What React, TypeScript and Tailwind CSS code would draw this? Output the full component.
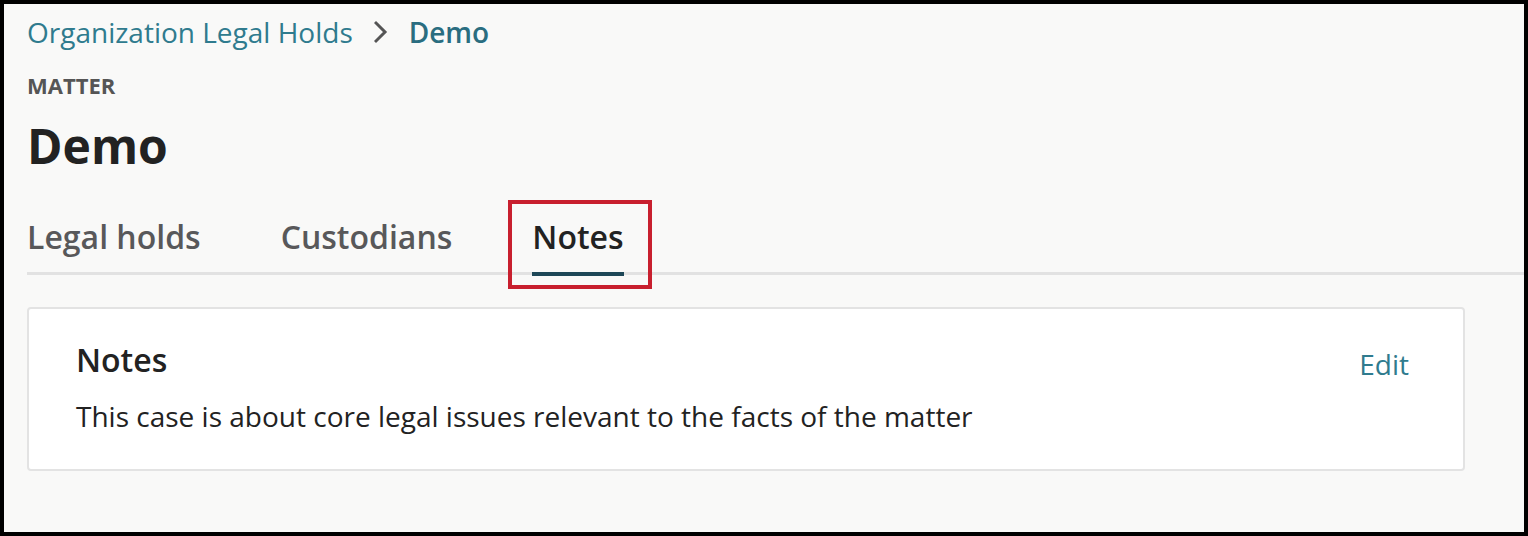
const font = { fontFamily: '"Open Sans", "Noto Sans", sans-serif' }

function Chevron() {
  return (
    <svg width="14" height="24" viewBox="0 0 14 24" className="mx-[21px]" aria-hidden>
      <polyline points="2,3 11,12 2,21" fill="none" stroke="#555555" strokeWidth="3" strokeLinecap="square" />
    </svg>
  )
}

const TABS = ["Legal holds", "Custodians", "Notes"]

export default function App() {
  const active = "Notes"
  return (
    <div style={font} className="h-[536px] w-full border-4 border-black bg-[#f9f9f8] box-border overflow-hidden">
      <div className="pl-[23px]">
        {/* breadcrumb */}
        <nav className="flex items-center pt-[8px] text-[28px] leading-[40px]">
          <a className="text-[#2f7b8e]">Organization Legal Holds</a>
          <Chevron />
          <span className="font-semibold text-[#2a6d80]">Demo</span>
        </nav>

        <p className="mt-[18px] text-[22px] leading-[30px] font-bold uppercase text-[#555555]">Matter</p>
        <h1 className="mt-[16px] text-[48px] leading-[60px] font-bold text-[#222222]">Demo</h1>

        {/* tabs */}
        <div className="mt-[39px] flex gap-[80px] border-b-[3px] border-[#e2e2e2]">
          {TABS.map((t) => (
            <div
              key={t}
              className={`relative pb-[13px] text-[32px] leading-[44px] font-semibold ${
                t === active ? "text-[#222222]" : "text-[#58585a]"
              }`}
            >
              {t}
              {t === active && (
                <>
                  <span className="absolute left-0 right-0 -bottom-[4px] h-1 bg-[#1d4757]" />
                  <span className="absolute -left-[24px] -top-[15px] -right-[28px] -bottom-[17px] border-4 border-[#c81f2e] z-10" />
                </>
              )}
            </div>
          ))}
        </div>

        {/* notes card */}
        <div className="mt-[32px] mr-[59px] rounded-[4px] border-2 border-[#e3e3e3] bg-white pl-[47px] pr-[54px] pt-[29px] pb-[33px]">
          <div className="flex items-start justify-between">
            <h2 className="text-[32px] leading-[44px] font-semibold text-[#222222]">Notes</h2>
            <button className="pt-[6px] text-[28px] leading-[40px] text-[#2f7b8e]">Edit</button>
          </div>
          <p className="mt-[12px] text-[28px] leading-[40px] text-[#222222]">
            This case is about core legal issues relevant to the facts of the matter
          </p>
        </div>
      </div>
    </div>
  )
}
